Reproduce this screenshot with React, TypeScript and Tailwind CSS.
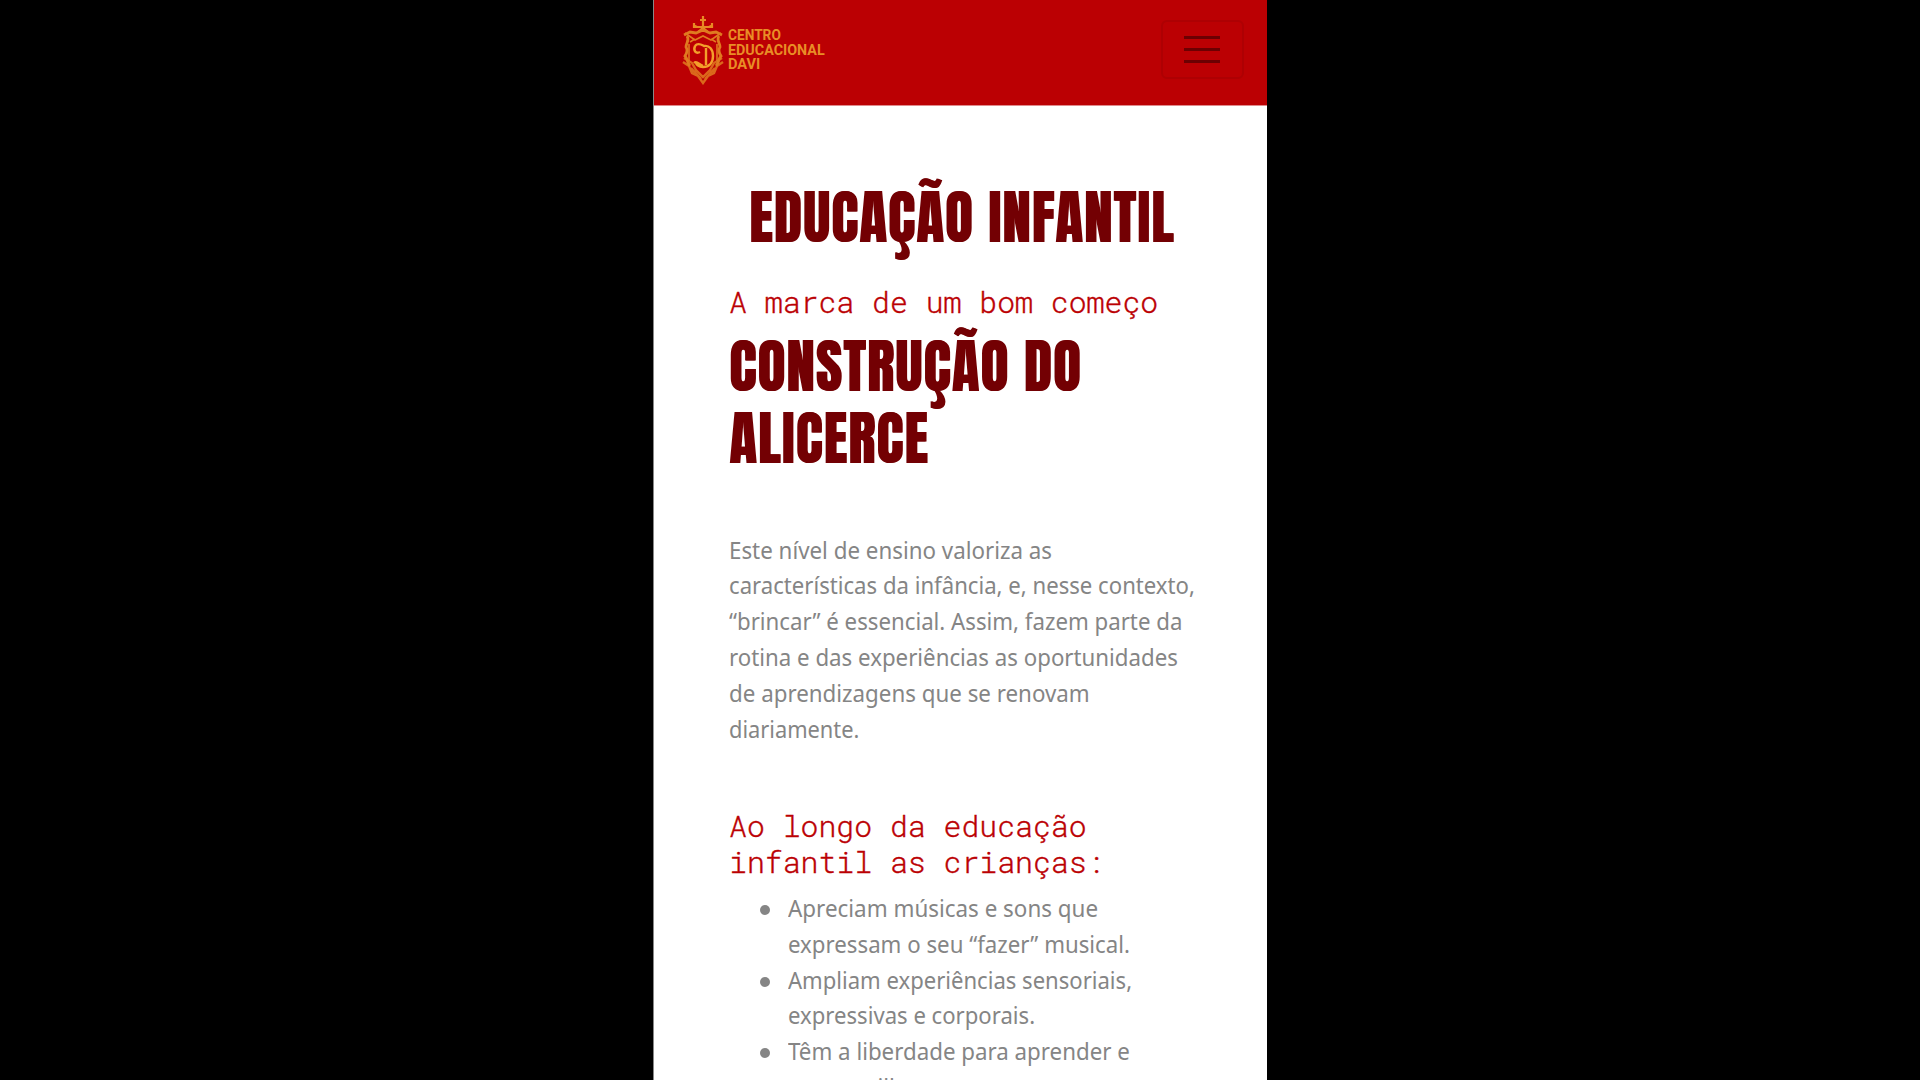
import { useLayoutEffect, useRef, useState } from 'react';

type FitProps = { text: string; width: number; className?: string };

/* A single line of text whose glyphs are scaled horizontally to an exact width. */
function Fit({ text, width, className = '' }: FitProps) {
  const ref = useRef<HTMLSpanElement>(null);
  const [scale, setScale] = useState(1);
  useLayoutEffect(() => {
    if (ref.current) setScale(width / ref.current.offsetWidth);
  }, [width, text]);
  return (
    <span
      ref={ref}
      className={`block w-max origin-left whitespace-nowrap ${className}`}
      style={{ transform: `scaleX(${scale})` }}
    >
      {text}
    </span>
  );
}

const paragraph: [string, number][] = [
  ['Este nível de ensino valoriza as', 323],
  ['características da infância, e, nesse contexto,', 466],
  ['“brincar” é essencial. Assim, fazem parte da', 453],
  ['rotina e das experiências as oportunidades', 449],
  ['de aprendizagens que se renovam', 361],
  ['diariamente.', 130],
];

const items: [string, number][][] = [
  [['Apreciam músicas e sons que', 310], ['expressam o seu “fazer” musical.', 342]],
  [['Ampliam experiências sensoriais,', 344], ['expressivas e corporais.', 247]],
  [['Têm a liberdade para aprender e', 342], ['compartilhar.', 139]],
];

const mono = "font-['Roboto_Mono','DejaVu_Sans_Mono',monospace] text-[29.8px] font-light leading-[35.8px] text-[#bb0003] [-webkit-text-stroke:0.4px_#bb0003]";
const display = "font-[Anton,Roboto,sans-serif] text-[59.6px] font-normal tracking-[1.2px] leading-[71.6px] text-[#730003] [text-shadow:1px_0_0_#730003]";

function Crest() {
  return (
    <svg viewBox="0 0 44 70" className="h-[70px] w-[44px]" fill="none" stroke="#e07a20" strokeWidth="1.6">
      <path d="M22 1v16M19 5h6M12 10l4 2h12l4-2M13 8v5M31 8v5M17 17l5-4 5 4" strokeWidth="2.2" stroke="#e88a24" />
      <path d="M3 20l6-3 6 1 7-3 7 3 6-1 6 3M6 21c3 4-1 7-1 11 2 3 1 6-1 9 3 3 2 7 5 10M38 21c-3 4 1 7 1 11-2 3-1 6 1 9-3 3-2 7-5 10" strokeWidth="2.8" />
      <path d="M4 18l10 7 8-4 8 4 10-7M9 27l5-3M35 27l-5-3M8 29v17M36 29v17" />
      <path d="M2 47l6 4 3 7 6 3 5 7 5-7 6-3 3-7 6-4M3 43l8 5 4 7 7 7 7-7 4-7 8-5M10 53l10 11M34 53L24 64" strokeWidth="2.4" opacity=".85" />
      <path d="M14 31c3-4 7-1 9 0 5-1 9 3 9 10s-4 11-10 11c-4 0-7-2-7-5M25 33v17M14 31c-2 5 1 8 5 6M13 48c3-3 5 2 9 3" stroke="#f3a02b" strokeWidth="2.4" />
    </svg>
  );
}

export default function App() {
  return (
    <div className="flex h-screen w-screen justify-center overflow-hidden bg-black">
      <main className="h-full w-[614px] shrink-0 overflow-hidden border-l border-[#888] bg-white">
        <header className="flex h-[106px] items-start justify-between border-b border-[#e08a8c] bg-[#bb0003] pl-[27px] pr-[23px]">
          <div className="flex pt-[15px]">
            <Crest />
            <div className="pl-[3px] pt-[13px] font-['Roboto',sans-serif] text-[15.5px] font-bold leading-[14.7px] text-[#e98d26]">
              <Fit text="CENTRO" width={53} />
              <Fit text="EDUCACIONAL" width={97} />
              <Fit text="DAVI" width={32} />
            </div>
          </div>
          <button aria-label="Menu" className="mt-5 flex h-[59px] w-[83px] flex-col items-center justify-center gap-[9px] rounded-[6px] border-2 border-[#ae0003] pr-0.5">
            <span className="h-[3px] w-9 bg-[#6c0002]" />
            <span className="h-[3px] w-9 bg-[#6c0002]" />
            <span className="h-[3px] w-9 bg-[#6c0002]" />
          </button>
        </header>
        <div className="pl-[75px]">
          <h1 className={`pl-5 pt-[76px] ${display}`}>
            <Fit text="EDUCAÇÃO INFANTIL" width={426} />
          </h1>
          <h2 className={`mt-[30px] ${mono}`}>
            <Fit text="A marca de um bom começo" width={429} />
          </h2>
          <div className={`mt-[12px] ${display}`}>
            <Fit text="CONSTRUÇÃO DO" width={353} />
            <Fit text="ALICERCE" width={200} />
          </div>
          <p className="mt-[57px] font-['Noto_Sans',sans-serif] text-[24px] leading-[35.8px] text-[#858585]">
            {paragraph.map(([t, w]) => <Fit key={t} text={t} width={w} />)}
          </p>
          <h2 className={`mt-[62px] ${mono}`}>
            <Fit text="Ao longo da educação" width={358} />
            <Fit text="infantil as crianças:" width={376} />
          </h2>
          <ul className="mt-[10px] font-['Noto_Sans',sans-serif] text-[24px] leading-[35.8px] text-[#858585]">
            {items.map((lines) => (
              <li key={lines[0][0]} className="flex">
                <span className="ml-[31px] mr-[18px] mt-[15px] size-[10px] shrink-0 rounded-full bg-[#858585]" />
                <div>
                  {lines.map(([t, w]) => <Fit key={t} text={t} width={w} />)}
                </div>
              </li>
            ))}
          </ul>
        </div>
      </main>
    </div>
  );
}
